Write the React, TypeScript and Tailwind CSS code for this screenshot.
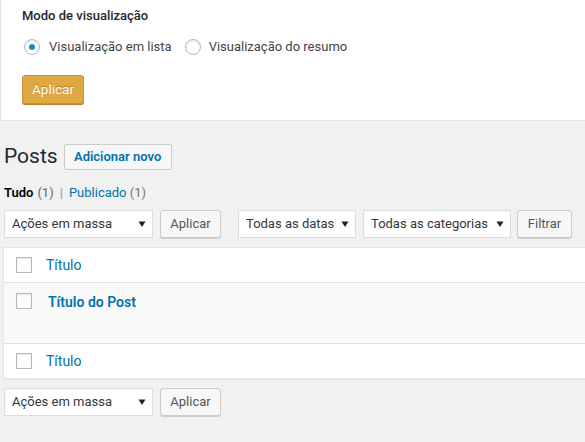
function Caret() {
  return (
    <svg width="8" height="8" viewBox="0 0 8 8" className="shrink-0">
      <path d="M0.5 1.5h7L4 7z" fill="#222" />
    </svg>
  );
}

function Select({ label, width }: { label: string; width: string }) {
  return (
    <div
      className={`${width} flex h-[28px] items-center justify-between whitespace-nowrap border border-[#ddd] bg-white pl-[7px] pr-[6px] text-[13px] text-[#32373c] shadow-[inset_0_1px_2px_rgba(0,0,0,0.04)]`}
    >
      <span>{label}</span>
      <Caret />
    </div>
  );
}

function Button({ children, width }: { children: string; width: string }) {
  return (
    <button
      className={`${width} h-[28px] rounded-[3px] border border-[#ccc] bg-[#f7f7f7] text-[13px] text-[#555] shadow-[0_1px_0_#ccc]`}
    >
      {children}
    </button>
  );
}

function Checkbox() {
  return (
    <span className="block h-[16px] w-[16px] shrink-0 border border-[#b4b9be] bg-white shadow-[inset_0_1px_2px_rgba(0,0,0,0.1)]" />
  );
}

function Radio({ checked }: { checked?: boolean }) {
  return (
    <span className="flex h-[16px] w-[16px] shrink-0 items-center justify-center rounded-full border border-[#b4b9be] bg-white shadow-[inset_0_1px_2px_rgba(0,0,0,0.1)]">
      {checked && <span className="h-[6px] w-[6px] rounded-full bg-[#1e8cbe]" />}
    </span>
  );
}

export default function App() {
  return (
    <div className="min-h-[442px] overflow-hidden bg-[#f1f1f1] font-['Segoe_UI',Roboto,'Liberation_Sans',sans-serif] text-[13px] text-[#444]">
      {/* Screen options panel */}
      <div className="h-[121px] border-b border-l border-[#e1e1e1] bg-white pl-[21px] pt-[6px]">
        <div className="text-[13px] font-medium leading-[20px] text-[#23282d]">Modo de visualização</div>
        <div className="mt-[11px] flex h-[20px] items-center text-[13px] text-[#444]">
          <label className="flex items-center gap-[9px]">
            <span className="ml-[2px]">
              <Radio checked />
            </span>
            Visualização em lista
          </label>
          <label className="ml-[13px] flex items-center gap-[8px]">
            <Radio />
            Visualização do resumo
          </label>
        </div>
        <button className="mt-[18px] h-[29px] w-[62px] rounded-[3px] border border-[#c89233] bg-[#e0a843] text-[13.5px] text-white shadow-[0_1px_0_#b8802a] [text-shadow:0_-1px_1px_#b07a21]">
          Aplicar
        </button>
      </div>

      <div className="pl-[4px]">
        {/* Heading */}
        <div className="mt-[21px] flex items-center gap-[6px]">
          <h1 className="text-[21px] leading-[29px] text-[#23282d]">Posts</h1>
          <button className="h-[26px] w-[108px] rounded-[2px] border border-[#ccc] bg-[#f7f7f7] text-[13px] font-semibold text-[#0073aa]">
            Adicionar novo
          </button>
        </div>

        {/* Status filters */}
        <div className="mt-[13px] flex h-[18px] items-center text-[13px] text-[#666]">
          <span className="font-semibold text-black">Tudo</span>
          <span className="ml-[4px]">(1)</span>
          <span className="mx-[6px] text-[#999]">|</span>
          <span className="text-[#0073aa]">
            Publicado <span className="text-[#777]">(1)</span>
          </span>
        </div>

        {/* Top tablenav */}
        <div className="mt-[8px] flex items-center">
          <Select label="Ações em massa" width="w-[149px]" />
          <div className="ml-[7px]">
            <Button width="w-[61px]">Aplicar</Button>
          </div>
          <div className="ml-[17px]">
            <Select label="Todas as datas" width="w-[118px]" />
          </div>
          <div className="ml-[7px]">
            <Select label="Todas as categorias" width="w-[148px]" />
          </div>
          <div className="ml-[6px]">
            <Button width="w-[55px]">Filtrar</Button>
          </div>
        </div>
      </div>

      {/* Posts table */}
      <div className="ml-[3px] mt-[9px] border border-r-0 border-[#e5e5e5] bg-white shadow-[0_1px_1px_rgba(0,0,0,0.04)]">
        <div className="flex h-[35px] items-center border-b border-[#e1e1e1] pl-[12px]">
          <Checkbox />
          <span className="ml-[14px] text-[14px] text-[#0073aa]">Título</span>
        </div>
        <div className="flex h-[60px] items-start bg-[#f9f9f9] pl-[12px] pt-[10px]">
          <Checkbox />
          <span className="-mt-[1px] ml-[16px] text-[14px] font-semibold text-[#0073aa]">Título do Post</span>
        </div>
        <div className="flex h-[35px] items-center border-t border-[#e1e1e1] pl-[12px]">
          <Checkbox />
          <span className="ml-[14px] text-[14px] text-[#0073aa]">Título</span>
        </div>
      </div>

      {/* Bottom tablenav */}
      <div className="mt-[9px] flex items-center pl-[4px]">
        <Select label="Ações em massa" width="w-[149px]" />
        <div className="ml-[7px]">
          <Button width="w-[61px]">Aplicar</Button>
        </div>
      </div>
    </div>
  );
}
